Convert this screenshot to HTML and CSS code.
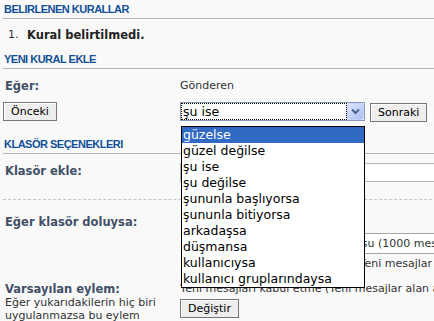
FILE: index.html
```html
<!DOCTYPE html>
<html lang="tr">
<head>
<meta charset="utf-8">
<title>Kurallar</title>
<link rel="stylesheet" href="styles.css">
</head>
<body>
<div class="page">
  <h3 class="sec sec-first">BELIRLENEN KURALLAR</h3>
  <ol class="rules">
    <li><span class="num">1.</span><strong>Kural belirtilmedi.</strong></li>
  </ol>

  <h3 class="sec sec-new">YENI KURAL EKLE</h3>
  <div class="row row-eger">
    <div class="dt"><span class="lbl">Eğer:</span></div>
    <div class="dd">Gönderen</div>
  </div>
  <div class="row row-btns">
    <div class="dt"><button class="btn">Önceki</button></div>
    <div class="dd dd-flex">
      <div class="select">
        <span class="sel-val">şu ise</span>
        <span class="sel-arrow">
          <svg width="17" height="17" viewBox="0 0 17 17">
            <defs>
              <linearGradient id="ag" x1="0" y1="0" x2="1" y2="1">
                <stop offset="0" stop-color="#dfe8fd"/>
                <stop offset="1" stop-color="#a9bdf2"/>
              </linearGradient>
            </defs>
            <rect x="0.5" y="0.5" width="16" height="16" rx="2" fill="url(#ag)" stroke="#c3d3fb"/>
            <path d="M5 6.5 L8.5 10 L12 6.5" fill="none" stroke="#4d6185" stroke-width="2"/>
          </svg>
        </span>
      </div>
      <button class="btn btn-next">Sonraki</button>
    </div>
  </div>

  <h3 class="sec sec-folder">KLASÖR SEÇENEKLERI</h3>
  <div class="row row-add">
    <div class="dt"><span class="lbl lbl-pad">Klasör ekle:</span></div>
    <div class="dd"><div class="textbox"></div></div>
  </div>
  <hr class="dashed">
  <div class="row row-full">
    <div class="dt"><span class="lbl">Eğer klasör doluysa:</span></div>
    <div class="dd">
      <div class="opt"><span class="radio"></span>En eski mesajları sil</div>
      <div class="opt opt-sel"><span class="radio"></span><span class="opt-label">Şuraya taşı:</span><div class="select2">Gelen kutusu (1000 mesaj)</div></div>
      <div class="opt opt-hold"><span class="radio"></span>Yeni mesajları kabul etme (Yeni mesajlar alan açılana kadar bekletilecek)</div>
    </div>
  </div>
  <div class="row row-default">
    <div class="dt">
      <span class="lbl">Varsayılan eylem:</span>
      <span class="explain">Eğer yukarıdakilerin hiç biri uygulanmazsa bu eylem</span>
    </div>
    <div class="dd">
      <div class="default-text">Yeni mesajları kabul etme (Yeni mesajlar alan açılana kadar bekletilecek)</div>
      <button class="btn btn-change">Değiştir</button>
    </div>
  </div>

  <ul class="droplist">
    <li class="active">güzelse</li>
    <li>güzel değilse</li>
    <li>şu ise</li>
    <li>şu değilse</li>
    <li>şununla başlıyorsa</li>
    <li>şununla bitiyorsa</li>
    <li>arkadaşsa</li>
    <li>düşmansa</li>
    <li>kullanıcıysa</li>
    <li>kullanıcı gruplarındaysa</li>
  </ul>
</div>
</body>
</html>
```

FILE: styles.css
```css
html, body {
  margin: 0;
  padding: 0;
  background: #f9f9f9;
  overflow: hidden;
}
body {
  font-family: "DejaVu Sans", Verdana, sans-serif;
  font-size: 11px;
  color: #333;
}
.page {
  position: relative;
  width: 640px;
  padding-left: 3px;
}
.sec {
  margin: 0;
  padding: 0 0 2px 1px;
  font-family: "Liberation Sans", Arial, sans-serif;
  font-size: 11px;
  line-height: 13px;
  font-weight: bold;
  letter-spacing: -0.5px;
  color: #115098;
  border-bottom: 1px solid #b4b4b4;
}
.sec-first { margin-top: 3px; }
.sec-new { margin-top: 11px; }
.sec-folder { margin-top: 16px; }

.rules {
  margin: 9px 0 0;
  padding: 0 0 0 5px;
  list-style: none;
  line-height: 14px;
}
.rules li { display: flex; }
.rules .num { width: 19px; color: #333; }
.rules strong { font-size: 11.5px; color: #222; }

.row {
  display: grid;
  grid-template-columns: 177px 1fr;
}
.dt { line-height: 14px; }
.lbl {
  display: block;
  padding-left: 2px;
  font-size: 11.5px;
  font-weight: bold;
  color: #425067;
  line-height: 14px;
}
.lbl-pad { padding-top: 1px; }
.dd { line-height: 14px; white-space: nowrap; }
.dd-flex { display: flex; align-items: flex-start; gap: 5px; }

.row-eger { margin-top: 10px; }
.row-btns { margin-top: 9px; }
.row-add { margin-top: 9px; }
.row-full { margin-top: 15px; }
.row-default { margin-top: 11px; }

.btn {
  font-family: "DejaVu Sans", Verdana, sans-serif;
  font-size: 11px;
  line-height: 15px;
  height: 19px;
  box-sizing: border-box;
  padding: 1px 7px;
  margin: 0;
  color: #000;
  background: #eeeeee;
  border: 1px solid #777;
  box-shadow: inset 1px 1px 0 #fff;
}
.btn-next { margin-top: 1px; }

.select {
  display: flex;
  width: 185px;
  height: 19px;
  box-sizing: border-box;
  border: 1px solid #8a9ab0;
  background: #fff;
}
.sel-val {
  flex: 1;
  border: 1px dotted #000;
  font-size: 12.5px;
  line-height: 15px;
  padding-left: 1px;
  color: #000;
}
.sel-arrow { width: 17px; height: 17px; display: block; }
.sel-arrow svg { display: block; }

.textbox {
  width: 280px;
  height: 19px;
  box-sizing: border-box;
  background: #fff;
  border: 1px solid #b4b4b4;
}

.dashed {
  margin: 17px 0 0;
  border: 0;
  border-top: 1px dashed #c4c4c4;
  height: 0;
}

.opt { display: flex; align-items: center; height: 14px; }
.radio {
  width: 11px;
  height: 11px;
  border: 1px solid #888;
  border-radius: 50%;
  background: #fff;
  margin: 0 12px 0 5px;
  flex: none;
}
.opt-sel { height: 21px; margin-top: 4px; }
.opt-label { width: 88px; }
.select2 {
  height: 21px;
  box-sizing: border-box;
  border: 1px solid #a5a5a5;
  background: #fff;
  padding: 2px 40px 0 3px;
  line-height: 16px;
}
.opt-hold { margin-top: 3px; }

.explain {
  display: block;
  padding-left: 2px;
  font-size: 11px;
  line-height: 13px;
  color: #333;
}
.default-text { line-height: 14px; }
.btn-change { margin-top: 3px; }

.droplist {
  position: absolute;
  left: 181px;
  top: 123px;
  width: 184px;
  box-sizing: border-box;
  margin: 0;
  padding: 0;
  list-style: none;
  background: #fff;
  border: 1px solid #000;
}
.droplist li {
  height: 16px;
  line-height: 16px;
  padding-left: 1px;
  font-size: 12.5px;
  color: #000;
  white-space: nowrap;
}
.droplist li.active {
  background: #316ac5;
  color: #fff;
}
```
